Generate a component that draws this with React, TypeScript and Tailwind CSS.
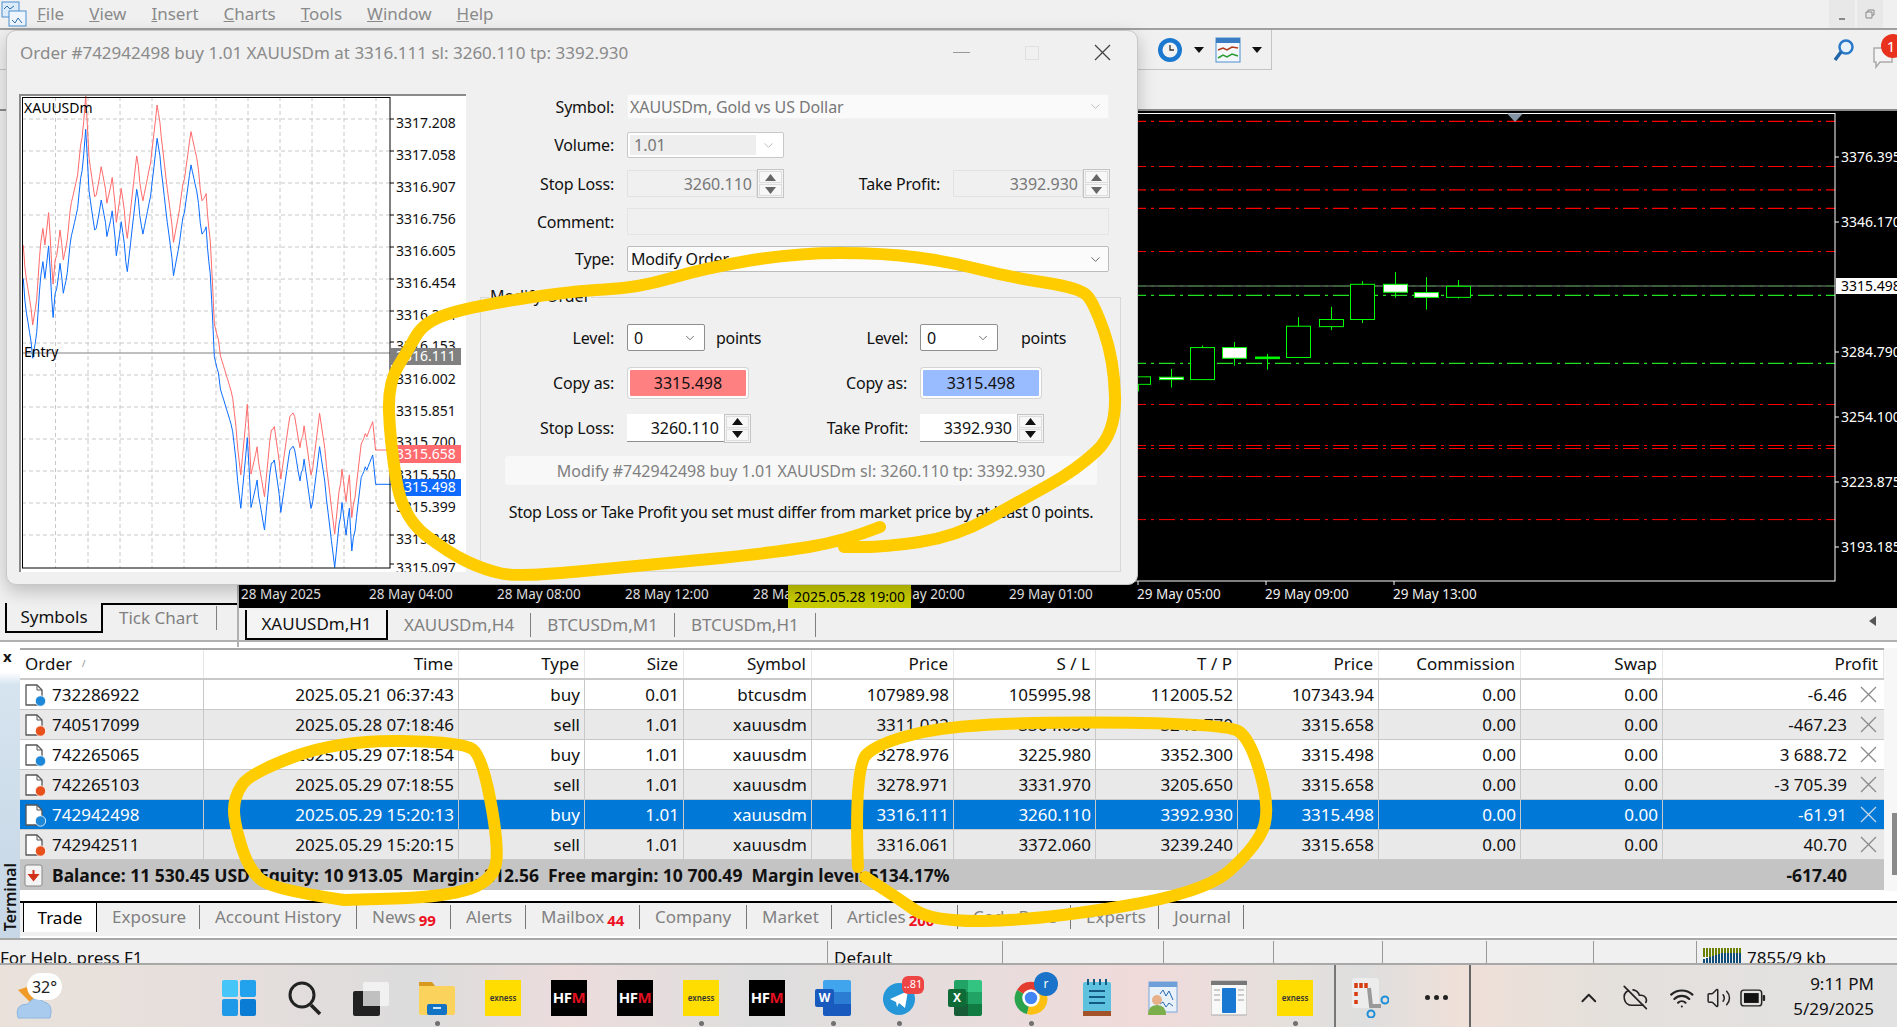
import { ChevronDown, ChevronUp, CloudOff, Volume2, Wifi } from "lucide-react"

const menus = ["File", "View", "Insert", "Charts", "Tools", "Window", "Help"]

const previewLabels: [string, number][] = [
  ["3317.208", 123], ["3317.058", 155], ["3316.907", 187], ["3316.756", 219], ["3316.605", 251],
  ["3316.454", 283], ["3316.304", 315], ["3316.153", 346], ["3316.002", 379], ["3315.851", 411],
  ["3315.700", 442], ["3315.550", 475], ["3315.399", 507], ["3315.248", 539], ["3315.097", 568],
]

// traced from the picture: x is scaled by 2.45, y by 3
const askLine = [
  [57, 745], [65, 840], [80, 965], [90, 900], [100, 720], [105, 690], [110, 730], [119, 645], [130, 850], [135, 790],
  [147, 690], [155, 770], [165, 720], [175, 600], [190, 530], [205, 360], [210, 295], [218, 470], [232, 600], [248, 500],
  [262, 600], [275, 535], [285, 660], [297, 570], [312, 710], [335, 475], [350, 600], [365, 520], [385, 315], [395, 400],
  [410, 570], [425, 720], [440, 630], [468, 390], [482, 480], [495, 600], [505, 590], [515, 720], [525, 960], [535, 1020],
  [540, 1060], [570, 1200], [590, 1420], [606, 1220], [615, 1420], [630, 1350], [648, 1490], [665, 1280], [672, 1282],
  [688, 1430], [710, 1255], [722, 1245], [735, 1350], [745, 1275], [762, 1435], [783, 1240], [800, 1390], [820, 1605],
  [838, 1400], [848, 1510], [856, 1420], [862, 1560], [885, 1330], [895, 1310], [913, 1265], [920, 1350],
]

function tickLine(points: number[][], offset: number, tail: number) {
  const out: string[] = []
  points.forEach((p, i) => {
    const next = points[i + 1]
    if (!next) return
    const steps = Math.max(1, Math.round((next[0] - p[0]) / 4))
    for (let s = 0; s < steps; s++) {
      const t = s / steps
      const noise = ((i * 31 + s * 17) % 9 - 4) * 2.4
      const x = (p[0] + (next[0] - p[0]) * t) / 2.45
      const y = (p[1] + offset + (next[1] - p[1]) * t + noise) / 3
      out.push(`${x.toFixed(1)},${y.toFixed(1)}`)
    }
  })
  const last = points[points.length - 1]
  out.push(`${(last[0] / 2.45).toFixed(1)},${((last[1] + offset) / 3).toFixed(1)}`)
  out.push(`${(last[0] / 2.45).toFixed(1)},${(tail / 3).toFixed(1)}`)
  out.push(`${(960 / 2.45).toFixed(1)},${(tail / 3).toFixed(1)}`)
  return out.join(" ")
}

// y, stroke width
const redLevels = [
  [121.4, 1.3], [166.5, 1], [189.8, 1.3], [208.4, 1.3], [251.5, 1], [404.5, 1], [445.5, 1], [448.5, 1], [476.5, 1], [519.6, 1],
]
const axisPrices: [string, number][] = [
  ["3376.395", 157], ["3346.170", 222], ["3284.790", 352], ["3254.100", 417], ["3223.875", 482], ["3193.185", 547],
]

// zoomed x, body top, body bottom, wick top, wick bottom, kind
const candles = [
  [37, 953, 972, 953, 990, 0], [102, 954, 960, 933, 980, 1], [166, 879, 960, 874, 960, 0], [231, 879, 906, 865, 925, 1],
  [296, 903, 907, 895, 935, 2], [360, 825, 904, 802, 904, 0], [425, 808, 826, 776, 835, 0], [489, 719, 808, 711, 817, 0],
  [554, 719, 739, 688, 753, 1], [618, 740, 752, 701, 783, 1], [683, 724, 752, 708, 755, 0],
]

const timeLabels = [
  "28 May 2025", "28 May 04:00", "28 May 08:00", "28 May 12:00", "28 May 16:00",
  "28 May 20:00", "29 May 01:00", "29 May 05:00", "29 May 09:00", "29 May 13:00",
]

const columns = "grid-cols-[184px_255px_126px_99px_128px_142px_142px_142px_141px_142px_142px_221px]"
const headers = ["Order", "Time", "Type", "Size", "Symbol", "Price", "S / L", "T / P", "Price", "Commission", "Swap", "Profit"]
const orders = [
  ["732286922", "2025.05.21 06:37:43", "buy", "0.01", "btcusdm", "107989.98", "105995.98", "112005.52", "107343.94", "0.00", "0.00", "-6.46"],
  ["740517099", "2025.05.28 07:18:46", "sell", "1.01", "xauusdm", "3311.023", "3364.030", "3240.770", "3315.658", "0.00", "0.00", "-467.23"],
  ["742265065", "2025.05.29 07:18:54", "buy", "1.01", "xauusdm", "3278.976", "3225.980", "3352.300", "3315.498", "0.00", "0.00", "3 688.72"],
  ["742265103", "2025.05.29 07:18:55", "sell", "1.01", "xauusdm", "3278.971", "3331.970", "3205.650", "3315.658", "0.00", "0.00", "-3 705.39"],
  ["742942498", "2025.05.29 15:20:13", "buy", "1.01", "xauusdm", "3316.111", "3260.110", "3392.930", "3315.498", "0.00", "0.00", "-61.91"],
  ["742942511", "2025.05.29 15:20:15", "sell", "1.01", "xauusdm", "3316.061", "3372.060", "3239.240", "3315.658", "0.00", "0.00", "40.70"],
]

const terminalTabs: { name: string; badge?: string; width: string }[] = [
  { name: "Exposure", width: "w-[103px]" },
  { name: "Account History", width: "w-[157px]" },
  { name: "News", badge: "99", width: "w-[94px]" },
  { name: "Alerts", width: "w-[75px]" },
  { name: "Mailbox", badge: "44", width: "w-[114px]" },
  { name: "Company", width: "w-[107px]" },
  { name: "Market", width: "w-[85px]" },
  { name: "Articles", badge: "200", width: "w-[126px]" },
  { name: "Code Base", width: "w-[113px]" },
  { name: "Experts", width: "w-[88px]" },
  { name: "Journal", width: "w-[85px]" },
]

const statusCells = [
  ["For Help, press F1", "w-[827px]"],
  ["Default", "w-[175px]"],
  ["", "w-[161px]"],
  ["", "w-[110px]"],
  ["", "w-[109px]"],
  ["", "w-[104px]"],
  ["", "w-[107px]"],
  ["", "w-[103px]"],
]

function smooth(points: number[][]) {
  let d = `M${points[0][0]} ${points[0][1]}`
  for (let i = 1; i < points.length - 1; i++) {
    const mx = (points[i][0] + points[i + 1][0]) / 2
    const my = (points[i][1] + points[i + 1][1]) / 2
    d += ` Q${points[i][0]} ${points[i][1]} ${mx} ${my}`
  }
  const end = points[points.length - 1]
  return `${d} L${end[0]} ${end[1]}`
}

const loopModify = [
  [880, 527], [845, 541], [772, 553], [638, 566], [518, 577], [485, 570], [449, 553], [402, 517], [390, 440], [388, 383],
  [408, 350], [424, 322], [469, 307], [571, 291], [638, 288], [705, 268], [795, 253], [884, 253], [951, 262], [1009, 277],
  [1080, 288], [1094, 303], [1114, 360], [1116, 433], [1076, 470], [1022, 500], [955, 537], [884, 547], [844, 547],
]
const loopTime = [
  [344, 900], [277, 890], [250, 873], [234, 823], [234, 797], [250, 773], [339, 740], [464, 742], [482, 757], [498, 840],
  [495, 880], [446, 897], [344, 900],
]
const loopPrice = [
  [858, 867], [854, 767], [879, 742], [968, 722], [1227, 723], [1251, 740], [1271, 813], [1253, 850], [1204, 893],
  [1039, 920], [932, 922], [896, 897], [865, 877],
]

function CrossIcon({ size, className }: { size: number; className?: string }) {
  return (
    <svg width={size} height={size} viewBox="0 0 17 17" className={className}>
      <path d="M1 1 L16 16 M16 1 L1 16" fill="none" stroke="currentColor" strokeWidth="1.3" />
    </svg>
  )
}

function Spinner({ dark }: { dark?: boolean }) {
  const fill = dark ? "#111111" : "#666666"
  return (
    <div className="flex flex-col gap-[1px] border border-[#c4c4c4] bg-[#f4f4f4] p-[1px]">
      {[0, 1].map((i) => (
        <div key={i} className="flex h-[12px] w-[23px] items-center justify-center border border-[#dddddd] bg-[#f7f7f7]">
          <svg width="11" height="7" viewBox="0 0 11 7">
            <path d={i === 0 ? "M5.5 0 L11 7 L0 7 Z" : "M0 0 L11 0 L5.5 7 Z"} fill={fill} />
          </svg>
        </div>
      ))}
    </div>
  )
}

function Label({ children }: { children: string }) {
  return <div className="w-[134px] text-right text-[16px] tracking-[-0.2px] text-[#111]">{children}</div>
}

function LevelSelect() {
  return (
    <div className="flex h-[27px] w-[78px] items-center justify-between rounded-[2px] border border-[#8f8f8f] bg-white pl-[6px] pr-[7px] text-[16px]">
      0
      <ChevronDown size={14} strokeWidth={1.4} className="text-[#555]" />
    </div>
  )
}

function CopyButton({ color }: { color: string }) {
  return (
    <div className={`flex h-[30px] w-[120px] items-center justify-center rounded-[3px] border-[2px] border-[#fdfdfd] text-[16px] text-[#111] shadow-[0_0_0_1px_#d4d4d4] ${color}`}>
      3315.498
    </div>
  )
}

function PriceInput({ value }: { value: string }) {
  return (
    <div className="flex h-[29px] items-center">
      <div className="flex h-[28px] w-[97px] items-center justify-end border-b border-[#8f8f8f] bg-white pr-[5px] text-[16px]">{value}</div>
      <Spinner dark />
    </div>
  )
}

function PreviewChart() {
  return (
    <svg width="447" height="478" viewBox="19 94 447 478" className="shrink-0 bg-white">
      <path d="M20 572 V95 H466" fill="none" stroke="#8a8a8a" strokeWidth="2" />
      {[55.5, 88, 120, 152, 184, 216, 248, 280, 312, 344, 376].map((x) => (
        <line key={x} x1={x} x2={x} y1="97" y2="568" stroke="#c8c8c8" strokeDasharray="4 3" />
      ))}
      {[119, 151, 183, 215, 247, 279, 311, 343, 375, 407, 439, 471, 503, 535].map((y) => (
        <line key={y} x1="22" x2="390" y1={y} y2={y} stroke="#c8c8c8" strokeDasharray="4 3" />
      ))}
      <line x1="22" x2="390" y1="353" y2="353" stroke="#808080" />
      <polyline points={tickLine(askLine, 100, 1453)} fill="none" stroke="#0a6cff" strokeWidth="1" />
      <polyline points={tickLine(askLine, 0, 1350)} fill="none" stroke="#ff6a6a" strokeWidth="1" />
      <rect x="22.5" y="97.5" width="367.5" height="470.5" fill="none" stroke="#000" strokeWidth="1" />
      <text x="24" y="113" fontSize="14" fill="#000">XAUUSDm</text>
      <text x="24" y="357" fontSize="14" fill="#000">Entry</text>
      {previewLabels.map(([text, y]) => (
        <g key={text}>
          <line x1="390" x2="394" y1={y - 4} y2={y - 4} stroke="#000" />
          <text x="396" y={y + 5} fontSize="14" fill="#111">{text}</text>
        </g>
      ))}
      <rect x="391" y="348" width="70" height="17" fill="#808080" />
      <text x="396" y="361" fontSize="14" fill="#fff">3316.111</text>
      <rect x="396" y="445" width="65" height="18" fill="#ff6b6f" />
      <text x="396" y="459" fontSize="14" fill="#fff">3315.658</text>
      <rect x="396" y="479" width="65" height="17" fill="#0f6bff" />
      <text x="396" y="492" fontSize="14" fill="#fff">3315.498</text>
    </svg>
  )
}

function OrderDialog() {
  return (
    <div className="absolute left-[6px] top-[30px] flex h-[555px] w-[1132px] flex-col rounded-[10px] border border-[#c8c8c8] bg-[#f0f0f0] shadow-[0_6px_18px_rgba(0,0,0,0.22)]">
      <div className="flex h-[43px] shrink-0 items-center justify-between pl-[13px] pr-[26px]">
        <span className="whitespace-nowrap text-[17px] text-[#8a8a8a]">Order #742942498 buy 1.01 XAUUSDm at 3316.111 sl: 3260.110 tp: 3392.930</span>
        <div className="flex items-center gap-[55px]">
          <div className="h-[1px] w-[17px] bg-[#999]" />
          <div className="h-[14px] w-[14px] border border-[#e0e0e0]" />
          <CrossIcon size={17} className="text-[#444]" />
        </div>
      </div>
      <div className="flex pl-[12px] pt-[20px]">
        <PreviewChart />
        <div className="ml-[14px] flex w-[641px] flex-col">
          <div className="flex h-[25px] items-center gap-[13px]">
            <Label>Symbol:</Label>
            <div className="flex h-[25px] w-[482px] items-center justify-between border border-[#f2f2f2] bg-[#fafafa] px-[2px] pr-[5px] text-[16px] tracking-[-0.1px] text-[#777]">
              XAUUSDm, Gold vs US Dollar
              <ChevronDown size={15} strokeWidth={1.2} className="text-[#aaa]" />
            </div>
          </div>
          <div className="mt-[13px] flex h-[26px] items-center gap-[13px]">
            <Label>Volume:</Label>
            <div className="flex h-[26px] w-[157px] items-center justify-between rounded-[2px] border border-[#c8c8c8] bg-white p-[2px] pr-[7px]">
              <div className="flex h-full w-[126px] items-center bg-[#eeeeee] pl-[4px] text-[16px] text-[#777]">1.01</div>
              <ChevronDown size={15} strokeWidth={1.2} className="text-[#aaa]" />
            </div>
          </div>
          <div className="mt-[12px] flex h-[27px] items-center gap-[13px]">
            <Label>Stop Loss:</Label>
            <div className="flex items-center">
              <div className="flex h-[27px] w-[130px] items-center justify-end border border-[#e2e2e2] pr-[4px] text-[16px] text-[#777]">3260.110</div>
              <Spinner />
            </div>
            <div className="ml-[20px] w-[123px] text-right text-[16px] tracking-[-0.2px] text-[#111]">Take Profit:</div>
            <div className="flex items-center">
              <div className="flex h-[27px] w-[130px] items-center justify-end border border-[#e2e2e2] pr-[4px] text-[16px] text-[#777]">3392.930</div>
              <Spinner />
            </div>
          </div>
          <div className="mt-[11px] flex h-[27px] items-center gap-[13px]">
            <Label>Comment:</Label>
            <div className="h-[27px] w-[482px] border border-[#e4e4e4]" />
          </div>
          <div className="mt-[11px] flex h-[26px] items-center gap-[13px]">
            <Label>Type:</Label>
            <div className="flex h-[26px] w-[482px] items-center justify-between rounded-[2px] border border-[#bcbcbc] bg-[#fbfbfb] pl-[3px] pr-[5px] text-[16px] tracking-[-0.2px] text-[#111]">
              Modify Order
              <ChevronDown size={15} strokeWidth={1.4} className="text-[#555]" />
            </div>
          </div>
          <fieldset className="mt-[25px] h-[275px] border border-[#d8d8d8]">
            <div className="relative">
              <span className="absolute -top-[12px] left-[8px] bg-[#f0f0f0] px-[1px] text-[16px] leading-[20px] text-[#111]">Modify Order</span>
            </div>
            <div className="mt-[26px] flex h-[27px] items-center">
              <div className="w-[133px] text-right text-[16px] tracking-[-0.2px]">Level:</div>
              <div className="ml-[13px]"><LevelSelect /></div>
              <div className="ml-[11px] w-[100px] text-[16px] tracking-[-0.3px]">points</div>
              <div className="ml-[44px] w-[48px] text-right text-[16px] tracking-[-0.2px]">Level:</div>
              <div className="ml-[12px]"><LevelSelect /></div>
              <div className="ml-[23px] text-[16px] tracking-[-0.3px]">points</div>
            </div>
            <div className="mt-[17px] flex h-[30px] items-center">
              <div className="w-[133px] text-right text-[16px] tracking-[-0.2px]">Copy as:</div>
              <div className="ml-[14px]"><CopyButton color="bg-[#ff8080]" /></div>
              <div className="ml-[89px] w-[70px] text-right text-[16px] tracking-[-0.2px]">Copy as:</div>
              <div className="ml-[14px]"><CopyButton color="bg-[#99bbff]" /></div>
            </div>
            <div className="mt-[16px] flex h-[28px] items-center">
              <div className="w-[133px] text-right text-[16px] tracking-[-0.2px]">Stop Loss:</div>
              <div className="ml-[13px]"><PriceInput value="3260.110" /></div>
              <div className="ml-[67px] w-[90px] whitespace-nowrap text-right text-[16px] tracking-[-0.2px]">Take Profit:</div>
              <div className="ml-[12px]"><PriceInput value="3392.930" /></div>
            </div>
            <div className="ml-[24px] mt-[14px] flex h-[29px] w-[592px] items-center justify-center rounded-[4px] bg-[#f8f8f8] text-[16px] text-[#808080]">
              Modify #742942498 buy 1.01 XAUUSDm sl: 3260.110 tp: 3392.930
            </div>
            <div className="ml-[24px] mt-[15px] w-[592px] whitespace-nowrap text-center text-[16px] tracking-[-0.31px] text-[#111]">
              Stop Loss or Take Profit you set must differ from market price by at least 0 points.
            </div>
          </fieldset>
        </div>
      </div>
    </div>
  )
}

function MainChart() {
  return (
    <div className="relative h-[497px] bg-black">
      <svg width="1658" height="497" viewBox="239 111 1658 497" className="absolute inset-0">
        {redLevels.map(([y, w]) => (
          <line key={y} x1="1130" x2="1835" y1={y} y2={y} stroke="#ff0000" strokeWidth={w} strokeDasharray="16 5 3 5" />
        ))}
        <line x1="1130" x2="1835" y1="295.4" y2="295.4" stroke="#22e022" strokeWidth="1.2" strokeDasharray="16 5 3 5" />
        <line x1="1130" x2="1835" y1="363.4" y2="363.4" stroke="#22e022" strokeWidth="1.2" strokeDasharray="16 5 3 5" />
        <line x1="1130" x2="1835" y1="286" y2="286" stroke="#7d8a7d" />
        <line x1="1130" x2="1835" y1="286" y2="286" stroke="#2f9f2f" strokeDasharray="16 5 3 5" opacity="0.6" />
        {candles.map(([zx, top, bottom, wickTop, wickBottom, kind]) => {
          const x = Math.round(1120 + zx / 2.018) + 0.5
          const t = top / 2.529
          const b = bottom / 2.529
          return (
            <g key={zx}>
              <line x1={x} x2={x} y1={wickTop / 2.529} y2={wickBottom / 2.529} stroke="#00ff00" />
              <rect x={x - 12} y={t} width="24" height={Math.max(b - t, 1)} fill={kind === 1 ? "#ffffff" : kind === 2 ? "#00ff00" : "#000000"} stroke="#00ff00" />
            </g>
          )
        })}
        <rect x="1000" y="113.5" width="835" height="467.5" fill="none" stroke="#ffffff" />
        <path d="M1507 113.5 H1523 L1515 122 Z" fill="#8494a4" />
        {axisPrices.map(([text, y]) => (
          <g key={text}>
            <line x1="1835" x2="1839" y1={y} y2={y} stroke="#fff" />
            <text x="1841" y={y + 5} fontSize="14" fill="#ffffff">{text}</text>
          </g>
        ))}
        <rect x="1836" y="278" width="61" height="16" fill="#ffffff" />
        <text x="1841" y="291" fontSize="14" fill="#000000">3315.498</text>
        {[1138, 1266, 1394].map((x) => (
          <line key={x} x1={x} x2={x} y1="581" y2="585" stroke="#fff" />
        ))}
      </svg>
      <div className="absolute bottom-[4px] left-[2px] flex text-[13.5px] leading-[20px] text-[#eeeeee]">
        {timeLabels.map((t) => (
          <div key={t} className="w-[128px] whitespace-nowrap">{t}</div>
        ))}
      </div>
      <div className="absolute bottom-0 left-[549px] flex h-[23px] w-[123px] items-center justify-center bg-[#c8cc00] text-[14px] text-black">
        2025.05.28 19:00
      </div>
    </div>
  )
}

function OrderIcon({ color }: { color: string }) {
  return (
    <svg width="24" height="24" viewBox="0 0 24 24" className="shrink-0">
      <path d="M3 2 H14 L19 7 V22 H3 Z" fill="#fff" stroke="#555" strokeWidth="1.3" strokeLinejoin="round" />
      <path d="M14 2 V7 H19" fill="none" stroke="#555" strokeWidth="1" />
      <circle cx="17.5" cy="18" r="5.2" fill={color} stroke="#fff" strokeWidth="0.8" />
    </svg>
  )
}

function OrdersTable() {
  return (
    <div className="flex-1">
      <div className={`grid h-[32px] ${columns} border-t-[2px] border-b-[2px] border-t-[#a8a8a8] border-b-[#c8c8c8] bg-white text-[17px]`}>
        {headers.map((h, i) => (
          <div key={i} className={`flex items-center border-r border-[#e6e6e6] px-[5px] ${i === 0 ? "justify-start gap-[10px]" : "justify-end"}`}>
            {h}
            {i === 0 && <span className="text-[9px] text-[#888]">/</span>}
          </div>
        ))}
      </div>
      {orders.map((order, r) => {
        const selected = r === 4
        const bg = selected ? "bg-[#0078d7] text-white" : r % 2 === 0 ? "bg-white text-[#111]" : "bg-[#e9e9e9] text-[#111]"
        return (
          <div key={order[0]} className={`grid h-[30px] ${columns} text-[17px] ${bg}`}>
            {order.map((cell, i) => {
              if (i === 0) {
                return (
                  <div key={i} className="flex items-center gap-[5px] border-r border-b border-[#c8c8c8] pl-[3px]">
                    <OrderIcon color={order[2] === "buy" ? "#1e88d8" : "#e8501c"} />
                    {cell}
                  </div>
                )
              }
              if (i === 11) {
                return (
                  <div key={i} className="flex items-center justify-end border-b border-[#c8c8c8] pr-[7px]">
                    {cell}
                    <CrossIcon size={17} className={`ml-[13px] ${selected ? "text-[#c8d8e8]" : "text-[#8a8a8a]"}`} />
                  </div>
                )
              }
              return (
                <div key={i} className="flex items-center justify-end border-r border-b border-[#c8c8c8] pr-[4px]">{cell}</div>
              )
            })}
          </div>
        )
      })}
      <div className="flex h-[30px] items-center justify-between bg-[#c4c4c4] pl-[3px] pr-[37px] text-[17.5px] font-bold text-[#111]">
        <div className="flex items-center gap-[7px]">
          <svg width="22" height="24" viewBox="0 0 22 24">
            <rect x="2" y="2" width="17" height="21" rx="2" fill="#f4f4f4" stroke="#888" />
            <path d="M10.5 7 V14 M6.5 12 L10.5 17 L14.5 12 Z" stroke="#d23018" strokeWidth="2" fill="#d23018" />
          </svg>
          <span className="whitespace-pre">Balance: 11 530.45 USD  Equity: 10 913.05  Margin: 212.56  Free margin: 10 700.49  Margin level: 5134.17%</span>
        </div>
        <span>-617.40</span>
      </div>
    </div>
  )
}

function Terminal() {
  return (
    <div className="relative h-[291px] bg-white">
      <div className="flex h-[244px] bg-white pt-[1px]">
        <div className="relative w-[20px] shrink-0 bg-[linear-gradient(to_bottom,#ffffff_10%,#d6e4f0_15%,#c8d8e6)]">
          <div className="pl-[3px] pt-[1px] text-[15px] font-bold leading-[14px]">x</div>
        </div>
        <OrdersTable />
        <div className="w-[13px] shrink-0 bg-[#f7f7f7]">
          <div className="ml-[8px] mt-[165px] h-[62px] w-[5px] bg-[#8a8a8a]" />
        </div>
      </div>
      <div className="flex h-[47px]">
        <div className="relative w-[20px] shrink-0 bg-[#c8d8e6]" />
        <div className="flex flex-1 flex-col">
          <div className="mt-[10px] flex h-[31px] border-t-[2px] border-black bg-[#f0f0f0] pl-[3px] text-[17px] text-[#808080]">
            <div className="flex h-[31px] w-[74px] items-center justify-center border-x border-b-[2px] border-black bg-white text-black">Trade</div>
            {terminalTabs.map((t) => (
              <div key={t.name} className={`${t.width} mt-[2px] flex h-[24px] items-center whitespace-nowrap border-r border-[#777] pl-[15px]`}>
                {t.name}
                {t.badge && <span className="ml-[3px] mt-[7px] text-[15px] font-bold leading-none text-[#ee1122]">{t.badge}</span>}
              </div>
            ))}
          </div>
          <div className="h-[4px] bg-[#f0f0f0]" />
        </div>
      </div>
      <div className="absolute bottom-[8px] left-0 flex h-[66px] w-[20px] items-center justify-center">
        <span className="rotate-180 text-[16px] font-semibold [writing-mode:vertical-rl]">Terminal</span>
      </div>
    </div>
  )
}

function StatusBar() {
  return (
    <div className="flex h-[25px] overflow-hidden border-t-[2px] border-[#a8a8a8] bg-[#f0f0f0] pt-[1px] text-[17px] text-[#111]">
      {statusCells.map(([text, width], i) => (
        <div key={i} className={`${width} shrink-0 ${i > 0 ? "border-l border-[#999] pl-[6px]" : ""} pt-[7px] leading-[20px]`}>{text}</div>
      ))}
      <div className="flex items-start gap-[6px] border-l border-[#999] pl-[6px] pt-[7px] leading-[20px]">
        <svg width="38" height="16" viewBox="0 0 38 16">
          {[0, 3, 6, 9, 12, 15, 18, 21, 24, 27, 30, 33, 36].map((x, i) => (
            <g key={x}>
              <line x1={x + 1} x2={x + 1} y1="0" y2="9" stroke="#6b7f00" strokeWidth="2" />
              <line x1={x + 1} x2={x + 1} y1={11 - Math.min(i, 6)} y2="16" stroke="#0f4c7a" strokeWidth="2" />
            </g>
          ))}
        </svg>
        7855/9 kb
      </div>
    </div>
  )
}

function Exness() {
  return (
    <div className="flex h-[36px] w-[36px] items-center justify-center bg-[#ffdd00] text-[8px] font-semibold text-[#333]">exness</div>
  )
}

function Hfm() {
  return (
    <div className="flex h-[36px] w-[36px] items-center justify-center bg-black text-[15px] font-bold tracking-[-0.5px] text-white">
      HF<span className="text-[#e01020]">M</span>
    </div>
  )
}

function Slot({ dot, children }: { dot?: boolean; children: React.ReactNode }) {
  return (
    <div className="relative flex h-full w-[66px] shrink-0 items-center justify-center">
      {children}
      {dot && <div className="absolute bottom-[1px] h-[5px] w-[5px] rounded-full bg-[#707070]" />}
    </div>
  )
}

function Taskbar() {
  return (
    <div className="flex h-[64px] items-center border-t-[2px] border-[#a8a8a8] bg-[linear-gradient(90deg,#e9e1da_0%,#e6dedc_12%,#dcdcdc_22%,#ecdcdc_30%,#dedede_40%,#e8dcdc_52%,#f0dada_60%,#e4e0dc_68%,#dedede_72%,#efe0d8_77%,#e4e0dc_85%,#e2e2e2_100%)] pt-[3px]">
      <div className="relative h-full w-[206px] shrink-0">
        <svg width="50" height="44" viewBox="0 0 50 44" className="absolute left-[12px] top-[14px]">
          <path d="M6 8 L24 2 L20 22 Z" fill="#f09a28" />
          <path d="M6 36 Q2 22 16 22 Q22 12 32 20 Q42 22 38 36 Z" fill="#a9cbee" stroke="#8fb6e0" />
        </svg>
        <div className="absolute left-[27px] top-[5px] flex h-[27px] w-[35px] items-center justify-center rounded-full bg-white text-[16px] text-[#222]">32°</div>
      </div>
      <Slot>
        <svg width="36" height="36" viewBox="0 0 36 36">
          <rect x="1" y="0" width="16" height="17" rx="2" fill="#46c6f8" />
          <rect x="19" y="0" width="16" height="17" rx="2" fill="#22a2ec" />
          <rect x="1" y="19" width="16" height="17" rx="2" fill="#1f9ae8" />
          <rect x="19" y="19" width="16" height="17" rx="2" fill="#0a7cd4" />
        </svg>
      </Slot>
      <Slot>
        <svg width="36" height="36" viewBox="0 0 36 36">
          <circle cx="15" cy="15" r="12" fill="none" stroke="#222" strokeWidth="3" />
          <line x1="24" y1="25" x2="33" y2="34" stroke="#222" strokeWidth="3.5" />
        </svg>
      </Slot>
      <Slot>
        <svg width="36" height="36" viewBox="0 0 36 36">
          <rect x="0" y="11" width="27" height="25" rx="2" fill="#222" />
          <rect x="10" y="2" width="26" height="24" rx="2" fill="#f4f4f4" opacity="0.85" />
          <rect x="10" y="11" width="17" height="15" fill="#c0c0c0" />
        </svg>
      </Slot>
      <Slot dot>
        <svg width="38" height="36" viewBox="0 0 38 36">
          <path d="M1 2 H14 L17 6 H1 Z" fill="#d89a1c" />
          <rect x="1" y="6" width="36" height="29" rx="2" fill="#fbd35c" />
          <rect x="9" y="24" width="20" height="11" rx="2" fill="#1273c4" />
          <rect x="15" y="27" width="8" height="2" fill="#cfe4f6" />
        </svg>
      </Slot>
      <Slot><Exness /></Slot>
      <Slot><Hfm /></Slot>
      <Slot><Hfm /></Slot>
      <Slot dot><Exness /></Slot>
      <Slot><Hfm /></Slot>
      <Slot dot>
        <div className="relative h-[36px] w-[36px]">
          <div className="absolute right-0 top-0 flex h-[36px] w-[28px] flex-col overflow-hidden rounded-[2px]">
            <div className="flex-1 bg-[#41a5ee]" />
            <div className="flex-1 bg-[#2b7cd3]" />
            <div className="flex-1 bg-[#185abd]" />
          </div>
          <div className="absolute left-0 top-[9px] flex h-[18px] w-[19px] items-center justify-center rounded-[2px] bg-[#185abd] text-[12px] font-bold text-white">W</div>
        </div>
      </Slot>
      <Slot dot>
        <div className="relative">
          <svg width="34" height="36" viewBox="0 0 34 36">
            <circle cx="17" cy="19" r="16" fill="#2596d8" />
            <path d="M8 19 L26 11 L23 28 L17 23 L15 27 L14 22 Z" fill="#fff" />
          </svg>
          <div className="absolute -right-[8px] -top-[4px] flex h-[18px] w-[22px] items-center justify-center rounded-[6px] bg-[#ee4444] text-[11px] text-white">..81</div>
        </div>
      </Slot>
      <Slot>
        <div className="relative h-[36px] w-[34px]">
          <div className="absolute right-0 top-0 grid h-[36px] w-[28px] grid-cols-2 overflow-hidden rounded-[2px]">
            <div className="bg-[#21a366]" /><div className="bg-[#33c481]" />
            <div className="bg-[#107c41]" /><div className="bg-[#21a366]" />
            <div className="bg-[#185c37]" /><div className="bg-[#107c41]" />
          </div>
          <div className="absolute left-0 top-[9px] flex h-[18px] w-[18px] items-center justify-center rounded-[2px] bg-[#0e6b38] text-[12px] font-bold text-white">X</div>
        </div>
      </Slot>
      <Slot dot>
        <div className="relative">
          <svg width="36" height="36" viewBox="0 0 36 36">
            <path d="M18 18 L32 10 A16 16 0 0 0 4 10 Z" fill="#e33b2e" />
            <path d="M18 18 L4 10 A16 16 0 0 0 14 34 Z" fill="#2ba24c" />
            <path d="M18 18 L14 34 A16 16 0 0 0 32 10 Z" fill="#fbc012" />
            <circle cx="18" cy="18" r="7.5" fill="#4285f4" stroke="#fff" strokeWidth="2.5" />
          </svg>
          <div className="absolute -right-[9px] -top-[8px] flex h-[24px] w-[24px] items-center justify-center rounded-full bg-[#1a73c8] text-[12px] text-white">r</div>
        </div>
      </Slot>
      <Slot>
        <svg width="30" height="38" viewBox="0 0 30 38">
          <rect x="1" y="3" width="28" height="30" rx="2" fill="#5ec1de" />
          <rect x="1" y="32" width="28" height="5" fill="#a4522a" />
          <path d="M7 12 H23 M7 18 H23 M7 24 H23" stroke="#135a82" strokeWidth="2" />
          <path d="M6 0 V6 M12 0 V6 M18 0 V6 M24 0 V6" stroke="#135a82" strokeWidth="2" />
        </svg>
      </Slot>
      <Slot>
        <svg width="34" height="36" viewBox="0 0 34 36">
          <rect x="3" y="2" width="28" height="30" fill="#e8f0fa" stroke="#7aa6d8" />
          <rect x="3" y="2" width="28" height="5" fill="#6f9fd8" />
          <path d="M14 14 l3 -4 l3 6 l3 -5 l4 9 M14 24 l3 -2 l3 5 l3 -4 l4 3" fill="none" stroke="#2a6ab0" />
          <circle cx="11" cy="20" r="5" fill="#e8b088" />
          <path d="M2 35 Q2 25 11 25 Q20 25 20 35 Z" fill="#7cae4c" />
        </svg>
      </Slot>
      <Slot>
        <svg width="36" height="36" viewBox="0 0 36 36">
          <rect x="0" y="1" width="36" height="34" rx="1" fill="#f8f8f8" stroke="#aaa" />
          <rect x="0" y="1" width="36" height="4" fill="#777" />
          <rect x="11" y="8" width="14" height="25" rx="1" fill="#1878d2" />
          <path d="M3 10 H9 M3 15 H9 M3 20 H9 M27 10 H33 M27 15 H33 M27 20 H33" stroke="#ccc" strokeWidth="2" />
        </svg>
      </Slot>
      <Slot dot><Exness /></Slot>
      <div className="ml-[6px] -mt-[3px] h-[62px] w-[2px] bg-[#777]" />
      <div className="ml-[1px] flex h-full">
        <Slot>
          <svg width="38" height="40" viewBox="0 0 38 40">
            <rect x="1" y="0" width="27" height="30" rx="3" fill="#ececec" />
            <path d="M5 5 V10 M10 5 V10 M15 5 V10 M5 14 V18 M5 22 V26" stroke="#d83a10" strokeWidth="3.5" />
            <path d="M18 10 L20 28 L30 28" fill="none" stroke="#999" strokeWidth="4" />
            <circle cx="34" cy="22" r="3.5" fill="none" stroke="#1c8fd8" strokeWidth="2" />
            <circle cx="20" cy="36" r="3.5" fill="none" stroke="#1c8fd8" strokeWidth="2" />
          </svg>
        </Slot>
        <Slot>
          <div className="flex gap-[4px]">
            <div className="h-[5px] w-[5px] rounded-full bg-[#222]" />
            <div className="h-[5px] w-[5px] rounded-full bg-[#222]" />
            <div className="h-[5px] w-[5px] rounded-full bg-[#222]" />
          </div>
        </Slot>
      </div>
      <div className="-mt-[3px] h-[62px] w-[2px] bg-[#666]" />
      <div className="ml-[105px] flex w-[190px] items-center text-[#222]">
        <ChevronUp size={26} strokeWidth={1.8} />
        <CloudOff size={27} strokeWidth={1.5} className="ml-[20px]" />
        <Wifi size={26} strokeWidth={2} className="ml-[21px]" />
        <Volume2 size={26} strokeWidth={1.4} className="ml-[11px]" />
        <svg width="26" height="20" viewBox="0 0 26 20" className="ml-[9px]">
          <rect x="1" y="2" width="21" height="16" rx="3" fill="none" stroke="#222" strokeWidth="1.5" />
          <rect x="4" y="5" width="15" height="10" fill="#111" />
          <rect x="23" y="7" width="2.5" height="6" rx="1" fill="#222" />
        </svg>
      </div>
      <div className="-mt-[3px] ml-[8px] flex w-[100px] flex-col items-end text-[17px] leading-[25px] text-[#111]">
        <span>9:11 PM</span>
        <span>5/29/2025</span>
      </div>
    </div>
  )
}

export default function App() {
  return (
    <div className="relative h-[1027px] w-[1897px] overflow-hidden bg-[#f0f0f0] font-['Noto_Sans',sans-serif] text-[#111]">
      {/* menu bar */}
      <div className="flex h-[30px] items-center border-b-[2px] border-[#a0a0a0] text-[17px] text-[#8a8a8a]">
        <svg width="26" height="26" viewBox="0 0 26 26" className="ml-[1px] mr-[10px]">
          <rect x="1" y="1" width="17" height="15" fill="#dcebfa" stroke="#4d8fd0" />
          <rect x="8" y="10" width="17" height="15" fill="#eef5fd" stroke="#4d8fd0" />
          <path d="M3 8 l3 -3 l3 3 l4 -3 M11 19 l3 3 l3 -5 l4 5" fill="none" stroke="#2d6fb0" />
        </svg>
        <div className="flex gap-[25px]">
          {menus.map((m) => (
            <span key={m}><span className="underline">{m[0]}</span>{m.slice(1)}</span>
          ))}
        </div>
        <div className="ml-auto mr-[14px] flex gap-[2px]">
          <div className="flex h-[28px] w-[26px] items-end justify-center bg-[#e8e8e8] pb-[8px]"><div className="h-[2px] w-[6px] bg-[#888]" /></div>
          <div className="flex h-[28px] w-[26px] items-center justify-center bg-[#e8e8e8]">
            <svg width="10" height="10" viewBox="0 0 10 10"><path d="M3 3 V1 H9 V6 H7 M1 3 H7 V9 H1 Z" fill="none" stroke="#888" /></svg>
          </div>
        </div>
      </div>

      {/* toolbar */}
      <div className="relative h-[81px] border-b-[2px] border-[#8c8c8c]">
        <div className="flex h-[40px] w-[1272px] items-center justify-end gap-[11px] border-r border-b border-[#c4c4c4] pr-[9px]">
          <svg width="26" height="26" viewBox="0 0 26 26">
            <circle cx="13" cy="13" r="12" fill="#1b78d0" />
            <circle cx="13" cy="13" r="7.5" fill="#f2f2f2" />
            <path d="M13 8 V13 H17" fill="none" stroke="#333" strokeWidth="1.3" />
          </svg>
          <svg width="10" height="6" viewBox="0 0 10 6"><path d="M0 0 H10 L5 6 Z" fill="#111" /></svg>
          <svg width="26" height="26" viewBox="0 0 26 26">
            <rect x="1" y="1" width="24" height="24" fill="#f4f8fc" stroke="#4d8fd0" />
            <rect x="1" y="1" width="24" height="5" fill="#3a7cc4" />
            <path d="M3 13 l5 -2 l4 2 l5 -3 l6 1" fill="none" stroke="#b03818" strokeWidth="1.5" />
            <path d="M3 21 l5 -3 l4 2 l5 -3 l6 2" fill="none" stroke="#2a9a30" strokeWidth="1.5" />
          </svg>
          <svg width="10" height="6" viewBox="0 0 10 6"><path d="M0 0 H10 L5 6 Z" fill="#111" /></svg>
        </div>
        <svg width="22" height="24" viewBox="0 0 22 24" className="absolute left-[1833px] top-[8px]">
          <circle cx="13" cy="9" r="6.5" fill="#e8f2fc" stroke="#2a78c8" strokeWidth="2.5" />
          <line x1="8" y1="14" x2="2" y2="22" stroke="#2264aa" strokeWidth="3.5" />
        </svg>
        <svg width="24" height="24" viewBox="0 0 24 24" className="absolute left-[1871px] top-[16px]">
          <path d="M3 2 H21 V16 H9 L5 21 V16 H3 Z" fill="#f4f4f4" stroke="#aaa" strokeWidth="1.5" />
        </svg>
        <div className="absolute left-[1881px] top-[4px] flex h-[24px] w-[24px] items-center justify-center rounded-full bg-[#e8321e] pr-[4px] text-[15px] text-white">1</div>
      </div>

      {/* charts */}
      <div className="flex h-[536px]">
        <div className="flex w-[239px] shrink-0 flex-col justify-end border-r-[2px] border-[#b0b0b0]">
          <div className="flex h-[30px] text-[17px] text-[#808080]">
            <div className="ml-[5px] flex h-[30px] w-[98px] items-center justify-center border-x-[2px] border-b-[2px] border-black text-[#111]">Symbols</div>
            <div className="flex h-[30px] flex-1 border-t-[2px] border-black pl-[16px] pt-[1px]">
              <div className="mr-[20px] flex h-[24px] flex-1 items-center whitespace-nowrap border-r border-[#808080]">Tick Chart</div>
            </div>
          </div>
          <div className="h-[7px]" />
          <div className="h-[7px] border-t-[2px] border-[#b0b0b0] bg-white" />
        </div>
        <div className="flex-1">
          <MainChart />
          <div className="flex h-[32px] items-start pl-[6px] text-[17px] text-[#808080]">
            <div className="mt-[2px] flex h-[30px] w-[143px] items-center justify-center border-x-[2px] border-b-[2px] border-black bg-[#f4f4f4] text-[#111]">XAUUSDm,H1</div>
            {["XAUUSDm,H4", "BTCUSDm,M1", "BTCUSDm,H1"].map((t) => (
              <div key={t} className="mt-[5px] flex h-[24px] items-center whitespace-nowrap border-r border-[#808080] px-[16px]">{t}</div>
            ))}
            <svg width="8" height="10" viewBox="0 0 8 10" className="ml-auto mr-[21px] mt-[8px]"><path d="M8 0 V10 L1 5 Z" fill="#555" /></svg>
          </div>
          <div className="h-[7px] border-t-[2px] border-[#b0b0b0] bg-white" />
        </div>
      </div>

      <Terminal />
      <StatusBar />
      <Taskbar />

      <OrderDialog />

      {/* yellow marker scribbles on top of the screenshot */}
      <svg width="1897" height="1027" viewBox="0 0 1897 1027" className="pointer-events-none absolute inset-0">
        <path d={smooth(loopModify)} fill="none" stroke="#ffcc00" strokeWidth="12" strokeLinecap="round" strokeLinejoin="round" />
        <path d={smooth(loopTime)} fill="none" stroke="#ffcc00" strokeWidth="12" strokeLinecap="round" strokeLinejoin="round" />
        <path d={smooth(loopPrice)} fill="none" stroke="#ffcc00" strokeWidth="12" strokeLinecap="round" strokeLinejoin="round" />
      </svg>
    </div>
  )
}
